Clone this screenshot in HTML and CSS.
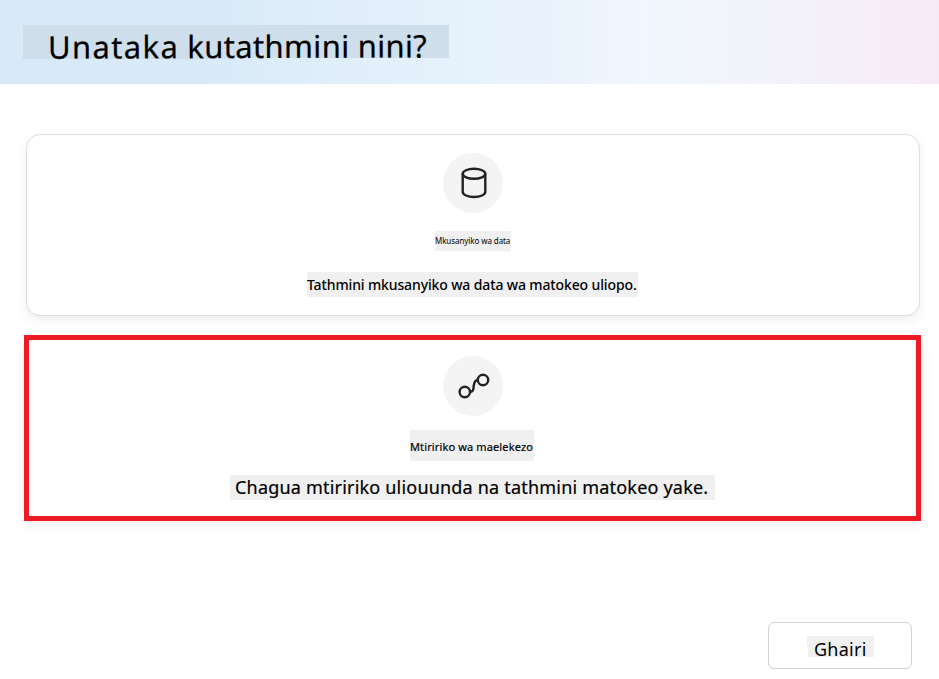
FILE: index.html
```
<!DOCTYPE html>
<html lang="sw">
<head>
<meta charset="utf-8">
<title>Unataka kutathmini nini?</title>
<link rel="stylesheet" href="styles.css">
</head>
<body>
<header class="header"><h1 class="title"><span><span class="wide">Unataka</span> <span class="word">kutathmini</span> <span class="word">nini?</span></span></h1></header>
<main class="options">
  <section class="card">
    <div class="icon">
      <svg width="60" height="60" viewBox="0 0 60 60"><path d="M19.700 20.800v18c0 3 5 5.200 11.300 5.200s11.300-2.200 11.300-5.200v-18"/><ellipse cx="31" cy="20.800" rx="11.300" ry="5"/></svg>
    </div>
    <h2 class="mark name-data">Mkusanyiko wa data</h2>
    <p class="mark desc-data">Tathmini mkusanyiko wa data wa matokeo uliopo.</p>
  </section>
  <section class="card selected">
    <div class="icon">
      <svg width="60" height="60" viewBox="0 0 60 60"><circle cx="21.800" cy="36" r="5.200"/><circle cx="40" cy="24" r="5.200"/><path d="M27 36c4.200 0 3.300-4 3.700-6s.6-6 4.100-6"/></svg>
    </div>
    <h2 class="mark name-flow">Mtiririko wa maelekezo</h2>
    <p class="mark desc-flow">Chagua mtiririko uliouunda na tathmini matokeo yake.</p>
  </section>
</main>
<footer class="footer"><button class="cancel" type="button"><span class="mark cancel-label">Ghairi</span></button></footer>
</body>
</html>
```
FILE: styles.css
```
* { box-sizing: border-box; }
body { margin: 0; width: 939px; height: 679px; overflow: hidden; background: #fff; color: #000; font-family: "Noto Sans", sans-serif; }
h1, h2, p { margin: 0; font-weight: 400; }
.mark { display: block; background: #f0f0f0; white-space: nowrap; }
.header { height: 84px; padding: 25px 0 0 23px; background: linear-gradient(90deg, #d8eaf8 0, #d8eaf8 210px, #e0eefa 330px, #e6f2fc 480px, #ebf3fc 570px, #f1f7fe 645px, #f2f5fb 710px, #f3f2f9 780px, #f5effa 850px, #f8ebf8 905px, #f8e9f6 939px); }
.title { width: 426px; height: 34px; padding-left: 25px; background: linear-gradient(#cfdeeb, #cfdeeb) 0 0 / 100% 33px no-repeat, linear-gradient(#cfdeeb, #cfdeeb) 0 0 / 210px 34px no-repeat; font-size: 31px; line-height: 43px; white-space: nowrap; }
.title > span { display: inline-block; transform: rotate(-.2deg); -webkit-text-stroke: .25px #000; }
.wide { letter-spacing: 1.35px; }
.word { letter-spacing: .35px; }
.options { display: flex; flex-direction: column; gap: 19px; padding: 134px 19px 0 26px; margin-top: -84px; }
.card { display: flex; flex-direction: column; align-items: center; height: 182px; padding-top: 18px; border: 1px solid #dedede; border-radius: 14px; background: #fff; box-shadow: 0 4px 12px rgba(0,0,0,.07); }
.icon { width: 60px; height: 60px; border-radius: 50%; background: #f4f4f4; }
.icon svg { display: block; fill: none; stroke: #222; stroke-width: 2.400; }
.name-data { width: 76px; height: 20px; margin-top: 18px; font-size: 8px; line-height: 20px; letter-spacing: -.08px; }
.desc-data { width: 331px; height: 25px; margin: 21px 1px 0 0; font-size: 14px; font-weight: 500; line-height: 25px; letter-spacing: -.13px; }
.selected { height: 186px; margin: 0 -1px 0 -2px; padding-top: 16px; border: 5px solid #ef1b24; border-radius: 0; }
.name-flow { width: 124px; height: 31px; margin: 14px 1px 0 0; font-size: 11px; line-height: 33px; letter-spacing: .13px; -webkit-text-stroke: .2px #000; }
.desc-flow { width: 485px; height: 25px; margin-top: 14px; padding-left: 5px; font-size: 18px; line-height: 25px; letter-spacing: .2px; -webkit-text-stroke: .2px #000; }
.footer { display: flex; justify-content: flex-end; padding: 101px 27px 0 0; }
.cancel { display: flex; width: 144px; height: 47px; padding: 13px 0 0 38px; border: 1px solid #d1d1d1; border-radius: 6px; background: #fff; color: #000; font: 18px "Noto Sans", sans-serif; text-align: left; }
.cancel-label { width: 67px; height: 21px; padding-left: 7px; line-height: 26px; letter-spacing: .25px; clip-path: polygon(0 0, 100% 0, 100% 100%, 1px 100%, 1px 10px, 0 10px); }
```
